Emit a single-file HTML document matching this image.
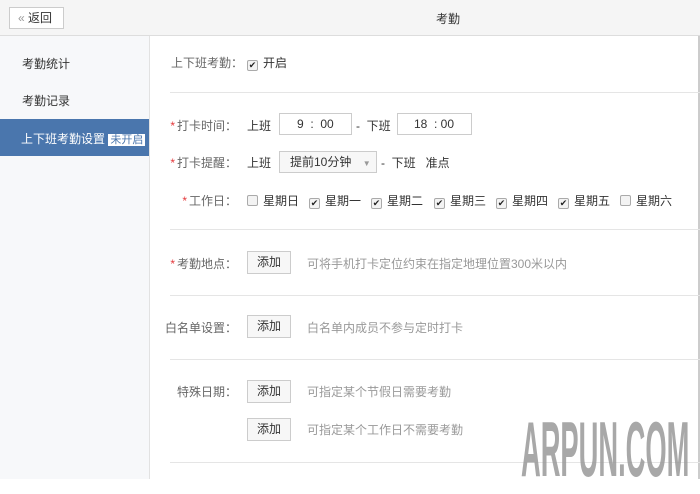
<!DOCTYPE html>
<html><head><meta charset="utf-8"><style>
*{margin:0;padding:0;box-sizing:border-box}
body{width:700px;height:479px;overflow:hidden;background:#fff;font-family:"Liberation Sans","Noto Sans CJK SC",sans-serif;font-size:12px;color:#333;position:relative}
.a{position:absolute;white-space:nowrap}
.hd{left:0;top:0;width:700px;height:36px;background:#f5f5f5;border-bottom:1px solid #ddd}
.back{left:9px;top:7px;width:55px;height:22px;border:1px solid #ccc;background:#fff;font-size:12px;line-height:20px;padding-left:8px}
.sb{left:0;top:36px;width:150px;height:443px;background:#f7f8fa;border-right:1px solid #e2e2e2}
.lbl{color:#666;text-align:right;width:90px;left:147px}
.star{color:#e4393c;margin-right:2px}
.hr{left:170px;width:530px;height:1px;background:#e5e5e5}
.box{border:1px solid #ccc;background:#fff;height:22px;line-height:20px}
.btn{border:1px solid #ccc;background:#f7f7f7;width:44px;height:23px;line-height:21px;text-align:center}
.cb{display:inline-block;width:11px;height:11px;border:1px solid #aaa;border-radius:2px;background:#f3f3f3;vertical-align:-1px;margin-right:5px;font-size:9px;line-height:9px;text-align:center;color:#222}
.tip{color:#999}
</style></head><body>
<div class="a hd"></div>
<div class="a back"><span style="color:#999">«</span> 返回</div>
<div class="a" style="left:436px;top:10px;font-size:12px">考勤</div>
<div class="a" style="right:0;top:36px;width:2px;height:443px;background:#ccc"></div>
<div class="a sb"></div>
<div class="a" style="left:22px;top:55px">考勤统计</div>
<div class="a" style="left:22px;top:92px">考勤记录</div>
<div class="a" style="left:0;top:119px;width:149px;height:37px;background:#4a76ad"></div>
<div class="a" style="left:21px;top:130px;color:#fff">上下班考勤设置 <span style="background:#fff;color:#4a76ad;font-size:11px;padding:0 2px">未开启</span></div>

<div class="a" style="left:171px;top:54px;color:#666">上下班考勤：</div>
<div class="a" style="left:247px;top:54px"><span class="cb">✔</span>开启</div>
<div class="a hr" style="top:92px"></div>

<div class="a lbl" style="top:117px"><span class="star">*</span>打卡时间：</div>
<div class="a" style="left:247px;top:117px">上班</div>
<div class="a box" style="left:279px;top:113px;width:73px;padding-left:17px">9 &nbsp;: &nbsp;00</div>
<div class="a" style="left:356px;top:117px">- &nbsp;下班</div>
<div class="a box" style="left:397px;top:113px;width:75px;padding-left:16px">18 &nbsp;: 00</div>

<div class="a lbl" style="top:154px"><span class="star">*</span>打卡提醒：</div>
<div class="a" style="left:247px;top:154px">上班</div>
<div class="a box" style="left:279px;top:151px;width:98px;padding-left:10px;background:#f7f7f7">提前10分钟 <span style="color:#999;font-size:8px;margin-left:8px">▼</span></div>
<div class="a" style="left:381px;top:154px">- &nbsp;下班 &nbsp; 准点</div>

<div class="a lbl" style="top:192px"><span class="star">*</span>工作日：</div>
<div class="a" style="left:247px;top:192px"><span class="cb"></span>星期日</div>
<div class="a" style="left:309px;top:192px"><span class="cb">✔</span>星期一</div>
<div class="a" style="left:371px;top:192px"><span class="cb">✔</span>星期二</div>
<div class="a" style="left:434px;top:192px"><span class="cb">✔</span>星期三</div>
<div class="a" style="left:496px;top:192px"><span class="cb">✔</span>星期四</div>
<div class="a" style="left:558px;top:192px"><span class="cb">✔</span>星期五</div>
<div class="a" style="left:620px;top:192px"><span class="cb"></span>星期六</div>
<div class="a hr" style="top:229px"></div>

<div class="a lbl" style="top:255px"><span class="star">*</span>考勤地点：</div>
<div class="a btn" style="left:247px;top:251px">添加</div>
<div class="a tip" style="left:307px;top:255px">可将手机打卡定位约束在指定地理位置300米以内</div>
<div class="a hr" style="top:295px"></div>

<div class="a lbl" style="top:319px">白名单设置：</div>
<div class="a btn" style="left:247px;top:315px">添加</div>
<div class="a tip" style="left:307px;top:319px">白名单内成员不参与定时打卡</div>
<div class="a hr" style="top:359px"></div>

<div class="a lbl" style="top:383px">特殊日期：</div>
<div class="a btn" style="left:247px;top:380px">添加</div>
<div class="a tip" style="left:307px;top:383px">可指定某个节假日需要考勤</div>
<div class="a btn" style="left:247px;top:418px">添加</div>
<div class="a tip" style="left:307px;top:421px">可指定某个工作日不需要考勤</div>
<div class="a hr" style="top:462px"></div>

<div class="a" style="left:521px;top:404px;font-size:78px;line-height:90px;font-weight:bold;color:#999;opacity:.85;transform:scaleX(0.35);transform-origin:left top;font-family:'Liberation Sans',sans-serif">ARPUN.COM</div>
</body></html>
